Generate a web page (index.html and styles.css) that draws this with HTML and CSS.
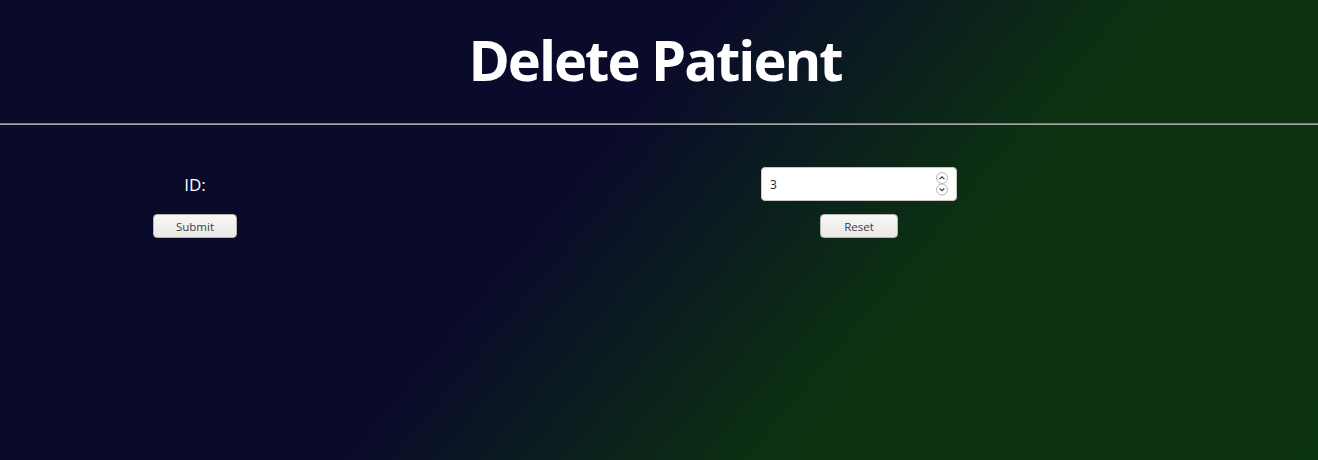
FILE: index.html
```html
<!DOCTYPE html>
<html lang="en">
<head>
<meta charset="utf-8">
<title>Delete Patient</title>
<link rel="stylesheet" href="styles.css">
</head>
<body>
<header class="page-header">
  <h1 class="title">Delete Patient</h1>
</header>
<hr class="divider">
<form class="form-grid" onsubmit="return false;">
  <label class="field-label" for="pid">ID:</label>
  <div class="input-wrap">
    <input class="num-input" id="pid" type="number" value="3">
    <span class="spinner">
      <svg width="14" height="26" viewBox="0 0 14 26" aria-hidden="true">
        <circle cx="7" cy="7" r="5.5" fill="#fff" stroke="#b8b6b2" stroke-width="1"/>
        <path d="M4.6 8.2 L7 5.8 L9.4 8.2" fill="none" stroke="#3a3a3a" stroke-width="1.2"/>
        <circle cx="7" cy="18.5" r="5.5" fill="#fff" stroke="#b8b6b2" stroke-width="1"/>
        <path d="M4.6 17.3 L7 19.7 L9.4 17.3" fill="none" stroke="#3a3a3a" stroke-width="1.2"/>
      </svg>
    </span>
  </div>
  <button class="btn btn-submit" type="submit">Submit</button>
  <button class="btn btn-reset" type="reset">Reset</button>
</form>
</body>
</html>
```

FILE: styles.css
```css
html, body {
  margin: 0;
  padding: 0;
  height: 100%;
}

body {
  background: linear-gradient(130deg, #0a0a2b 0%, #0a0a2b 42%, #0c3211 68%, #0c3310 100%);
  font-family: "Open Sans", "DejaVu Sans", sans-serif;
  color: #ffffff;
  overflow: hidden;
}

.page-header {
  height: 123px;
  display: flex;
  justify-content: center;
  padding-right: 8px;
  box-sizing: border-box;
}

.title {
  margin: 21px 0 0 0;
  font-family: "Open Sans", sans-serif;
  font-weight: 700;
  font-size: 56px;
  letter-spacing: -2px;
  line-height: 76px;
  color: #ffffff;
}

.divider {
  margin: 0;
  height: 0;
  border: none;
  border-top: 1px solid #7c7c7c;
  border-bottom: 1px solid #a2a2a2;
}

.form-grid {
  display: grid;
  grid-template-columns: 390px 918px;
  column-gap: 10px;
  row-gap: 13px;
  justify-items: center;
  align-items: center;
  padding-top: 42px;
}

.field-label {
  font-size: 17px;
  color: #ffffff;
}

.input-wrap {
  position: relative;
  width: 196px;
  height: 34px;
}

.num-input {
  box-sizing: border-box;
  width: 196px;
  height: 34px;
  margin: 0;
  padding: 0 8px;
  border: 1px solid #c9c7c3;
  border-radius: 4px;
  background: #ffffff;
  font-family: "Open Sans", sans-serif;
  font-size: 12px;
  color: #2a1e0e;
  outline: none;
  -moz-appearance: textfield;
  appearance: textfield;
}

.num-input::-webkit-inner-spin-button,
.num-input::-webkit-outer-spin-button {
  -webkit-appearance: none;
  margin: 0;
}

.spinner {
  position: absolute;
  right: 8px;
  top: 4px;
  width: 14px;
  height: 26px;
  pointer-events: none;
}

.spinner svg {
  display: block;
}

.btn {
  box-sizing: border-box;
  height: 24px;
  padding: 0;
  border: 1px solid #b7b4ae;
  border-radius: 4px;
  background: linear-gradient(to bottom, #f8f7f6, #ebe9e6);
  font-family: "Open Sans", sans-serif;
  font-size: 11.5px;
  color: #3c3c3c;
}

.btn-submit {
  width: 84px;
}

.btn-reset {
  width: 78px;
}
```
